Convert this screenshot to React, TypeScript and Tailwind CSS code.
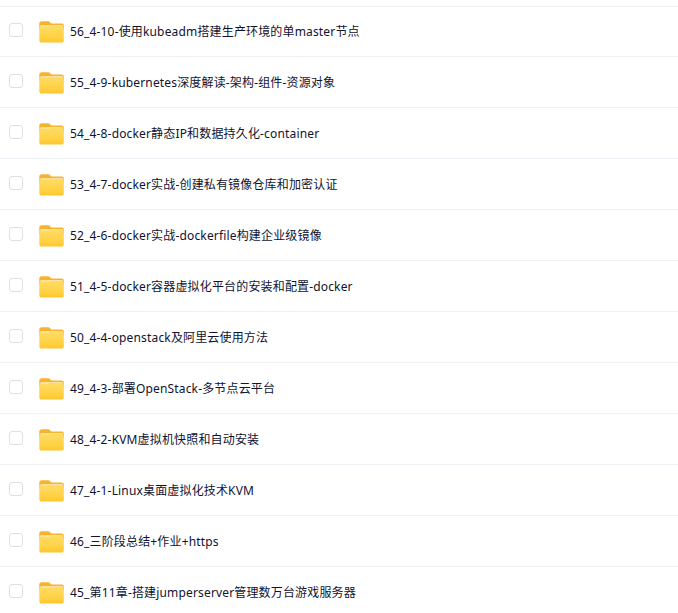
const folders = [
  '56_4-10-使用kubeadm搭建生产环境的单master节点',
  '55_4-9-kubernetes深度解读-架构-组件-资源对象',
  '54_4-8-docker静态IP和数据持久化-container',
  '53_4-7-docker实战-创建私有镜像仓库和加密认证',
  '52_4-6-docker实战-dockerfile构建企业级镜像',
  '51_4-5-docker容器虚拟化平台的安装和配置-docker',
  '50_4-4-openstack及阿里云使用方法',
  '49_4-3-部署OpenStack-多节点云平台',
  '48_4-2-KVM虚拟机快照和自动安装',
  '47_4-1-Linux桌面虚拟化技术KVM',
  '46_三阶段总结+作业+https',
  '45_第11章-搭建jumperserver管理数万台游戏服务器',
];

function FolderIcon() {
  return (
    <svg width="25" height="22" viewBox="0 0 25 22" className="shrink-0">
      <defs>
        <linearGradient id="folderFill" x1="0" y1="0" x2="0" y2="1">
          <stop offset="0" stopColor="#ffdc66" />
          <stop offset="0.7" stopColor="#ffd143" />
          <stop offset="1" stopColor="#ffc52a" />
        </linearGradient>
      </defs>
      <path d="M0.3 2.6C0.3 1.2 1.3 0.3 2.6 0.3H9C10 0.3 10.7 0.7 11.3 1.4L12.4 2.6H22.6C24 2.6 24.8 3.5 24.8 4.8V9H0.3Z" fill="#f9b32a" />
      <path d="M1.5 4.2H23.6V7H1.5Z" fill="#fdeec0" />
      <path d="M0.3 5.5H9.5C10.6 5.5 11.3 5.1 12 4.4L12.6 4.9H22.6C24 4.9 24.8 5.7 24.8 7V19.3C24.8 20.7 24 21.6 22.6 21.6H2.6C1.2 21.6 0.3 20.7 0.3 19.3Z" fill="url(#folderFill)" />
    </svg>
  );
}

export default function App() {
  return (
    <div className="h-[613px] w-[678px] overflow-hidden bg-white pt-[6px] font-['Noto_Sans','Noto_Sans_CJK_SC',sans-serif]">
      <div className="shadow-[inset_0_1px_0_#f1f2f7]">
        {folders.map((name) => (
          <div key={name} className="flex h-[51px] items-center border-b border-[#f1f2f7] pl-[9px]">
            <div className="mb-[2px] h-[14px] w-[14px] shrink-0 rounded-[3px] border border-[#dfe0e4] bg-white" />
            <div className="ml-[16px] mt-[2px] flex">
              <FolderIcon />
            </div>
            <span className="ml-[6px] mt-[2px] text-[12px] tracking-[0.16px] text-[#0f1330]">{name}</span>
          </div>
        ))}
      </div>
    </div>
  );
}
